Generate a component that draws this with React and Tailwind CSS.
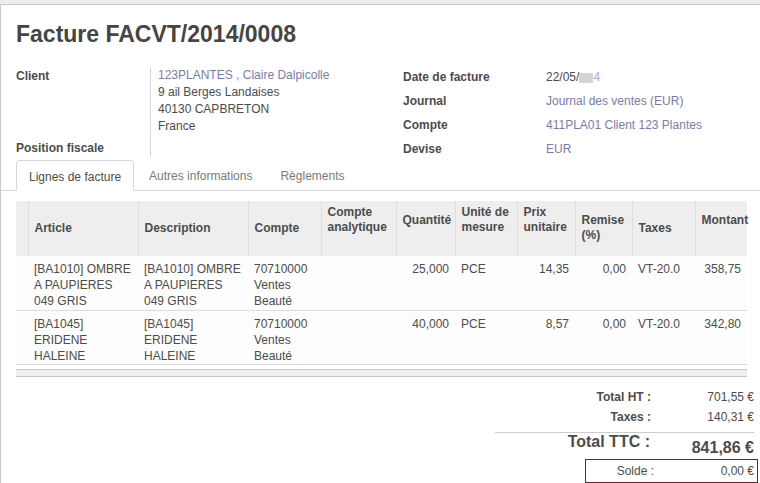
import React from 'react'

const link = 'text-[#7c7bad]'

const cols = [
  { w: 12, label: '' },
  { w: 110, label: 'Article' },
  { w: 110, label: 'Description' },
  { w: 73, label: 'Compte' },
  { w: 75, label: 'Compte analytique', cls: 'align-top pt-[4px]' },
  { w: 59, label: 'Quantité', cls: 'align-top pt-[12px]' },
  { w: 62, label: 'Unité de mesure', cls: 'align-top pt-[4px]' },
  { w: 58, label: 'Prix unitaire', cls: 'align-top pt-[4px]' },
  { w: 57, label: 'Remise (%)', cls: 'align-top pt-[12px]' },
  { w: 63, label: 'Taxes' },
  { w: 52, label: 'Montant', cls: 'align-top pt-[12px]' },
]

const rows = [
  ['[BA1010] OMBRE A PAUPIERES 049 GRIS', '[BA1010] OMBRE A PAUPIERES 049 GRIS', '25,000', '14,35', '358,75'],
  ['[BA1045] ERIDENE HALEINE', '[BA1045] ERIDENE HALEINE', '40,000', '8,57', '342,80'],
]

const Field = ({ label, children }) => (
  <div className="flex">
    <div className="w-[143px] font-bold">{label}</div>
    <div>{children}</div>
  </div>
)

export default function App() {
  return (
    <div className="w-[760px] h-[483px] overflow-hidden bg-[#f0f0f0] text-[12px] text-[#4c4c4c]" style={{ fontFamily: '"Liberation Sans", Arial, sans-serif' }}>
      <div className="h-[4px] bg-[#ececec]" />
      <div className="h-[479px] bg-white border-t border-l border-[#c8c8d2]">
        <h1 className="pl-[15px] pt-[15px] text-[23px] font-bold leading-[28px] text-[#454545]">Facture FACVT/2014/0008</h1>

        <div className="flex pt-[19px]">
          <div className="flex w-[402px]">
            <div className="w-[149px] pl-[15px] flex flex-col justify-between">
              <div className="font-bold">Client</div>
              <div className="font-bold">Position fiscale</div>
            </div>
            <div className="border-l border-[#d8d8d8] pl-[7px] h-[90px] leading-[17px]">
              <div className={link}>123PLANTES , Claire Dalpicolle</div>
              <div>9 ail Berges Landaises</div>
              <div>40130 CAPBRETON</div>
              <div>France</div>
            </div>
          </div>
          <div className="flex flex-col gap-[9px] pt-[3px] leading-[15px]">
            <Field label="Date de facture">
              <span>22/05/</span>
              <span className="inline-block w-[14px] h-[10px] bg-[#d8d2d8] align-middle" />
              <span className="text-[#9aaedc]">4</span>
            </Field>
            <Field label="Journal"><span className={link}>Journal des ventes (EUR)</span></Field>
            <Field label="Compte"><span className={link}>411PLA01 Client 123 Plantes</span></Field>
            <Field label="Devise"><span className={link}>EUR</span></Field>
          </div>
        </div>

        <div className="mt-[4px] flex items-end border-b border-[#d8d8d8] pl-[15px] h-[30px] text-[12px]">
          <div className="h-[31px] -mb-px px-[12px] pt-[2px] flex items-center border border-b-white border-[#d8d8d8] rounded-t-[4px] bg-white">Lignes de facture</div>
          <div className="h-[30px] px-[15px] pt-[2px] flex items-center text-[#7a7a7a]">Autres informations</div>
          <div className="h-[30px] px-[13px] pt-[2px] flex items-center text-[#7a7a7a]">Règlements</div>
        </div>

        <div className="pl-[15px] pt-[10px]">
          <table className="table-fixed w-[731px] border-collapse">
            <colgroup>
              {cols.map((c, i) => <col key={i} style={{ width: c.w }} />)}
            </colgroup>
            <thead>
              <tr className="bg-[#eeeeee] h-[55px]">
                {cols.map((c, i) => (
                  <th key={i} className={`font-bold text-left leading-[15px] px-[6px] border-l border-[#dedede] first:border-l-0 ${c.cls || 'align-middle'}`}>
                    {c.label}
                  </th>
                ))}
              </tr>
            </thead>
            <tbody>
              {rows.map((r, i) => (
                <tr key={i} className="bg-[#fdfdfd] border-b border-[#dcdcdc] align-top leading-[16px] h-[54px]">
                  <td />
                  <td className="px-[6px] pt-[5px]">{r[0]}</td>
                  <td className="px-[6px] pt-[5px]">{r[1]}</td>
                  <td className="px-[6px] pt-[5px]">70710000 Ventes Beauté</td>
                  <td />
                  <td className="px-[6px] pt-[5px] text-right">{r[2]}</td>
                  <td className="px-[6px] pt-[5px]">PCE</td>
                  <td className="px-[6px] pt-[5px] text-right">{r[3]}</td>
                  <td className="px-[6px] pt-[5px] text-right">0,00</td>
                  <td className="px-[6px] pt-[5px]">VT-20.0</td>
                  <td className="px-[6px] pt-[5px] text-right">{r[4]}</td>
                </tr>
              ))}
            </tbody>
          </table>
          <div className="mt-[4px] h-[8px] w-[731px] bg-[#eeeeee] border-y border-[#c8c8c8]" />
        </div>

        <div className="flex justify-end pr-[2px] pt-[10px]">
          <div className="w-[263px]">
            <div className="flex leading-[20px] mr-[4px]">
              <div className="flex-1 text-right font-bold pr-[3px]">Total HT :</div>
              <div className="w-[100px] text-right">701,55 €</div>
            </div>
            <div className="flex leading-[20px] pb-[5px] mr-[4px] border-b border-[#cccccc]">
              <div className="flex-1 text-right font-bold pr-[3px]">Taxes :</div>
              <div className="w-[100px] text-right">140,31 €</div>
            </div>
            <div className="flex h-[26px] mr-[4px] font-bold text-[16px] leading-[16px]">
              <div className="flex-1 text-right pr-[4px] pt-[1px]">Total TTC :</div>
              <div className="w-[100px] text-right pt-[7px]">841,86 €</div>
            </div>
            <div className="ml-[90px] flex h-[24px] items-center border border-[#7a1c2e]">
              <div className="flex-1 text-right pr-[3px]">Solde :</div>
              <div className="w-[100px] text-right pr-[3px]">0,00 €</div>
            </div>
          </div>
        </div>
      </div>
    </div>
  )
}
